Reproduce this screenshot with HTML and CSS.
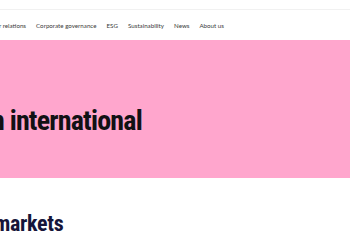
FILE: index.html
```html
<!DOCTYPE html>
<html lang="en">
<head>
<meta charset="UTF-8">
<meta name="viewport" content="width=device-width, initial-scale=1.0">
<title>Investor relations</title>
<link rel="stylesheet" href="styles.css">
</head>
<body>
    <!-- Top bar -->
    <div class="topbar"></div>

    <!-- Main navigation -->
    <nav class="mainnav">
        <a href="#" class="first">r relations</a>
        <a href="#">Corporate governance</a>
        <a href="#">ESG</a>
        <a href="#">Sustainability</a>
        <a href="#">News</a>
        <a href="#">About us</a>
    </nav>

    <!-- Hero -->
    <section class="hero">
        <h1>n international</h1>
    </section>

    <!-- Content -->
    <section class="content">
        <h2>markets</h2>
    </section>
</body>
</html>
```
FILE: styles.css
```css
body {
    margin: 0;
    font-family: Lato, Arial, sans-serif;
    background: #fff;
    overflow: hidden;
}
.topbar {
    height: 9px;
    border-bottom: 1px solid #f1f1f1;
}
.mainnav {
    height: 30px;
    display: flex;
    align-items: center;
    gap: 10px;
    padding-top: 1px;
    box-sizing: border-box;
}
.mainnav a {
    font-size: 6.2px;
    color: #3a3a3a;
    text-decoration: none;
    white-space: nowrap;
}
.mainnav a.first {
    margin-left: -1px;
}
.hero {
    background: #ffa6cd;
    height: 138px;
    display: flex;
    align-items: center;
}
.hero h1 {
    margin: 0 0 0 -9px;
    padding-top: 22px;
    font-family: "Roboto Condensed", "Liberation Sans", sans-serif;
    font-size: 28px;
    font-weight: 700;
    letter-spacing: -0.8px;
    color: #111114;
    white-space: nowrap;
}
.content {
    padding-top: 33px;
}
.content h2 {
    margin: 0 0 0 -6px;
    font-family: "Roboto Condensed", "Liberation Sans", sans-serif;
    font-size: 22px;
    font-weight: 700;
    letter-spacing: -0.3px;
    color: #15153a;
}
```
